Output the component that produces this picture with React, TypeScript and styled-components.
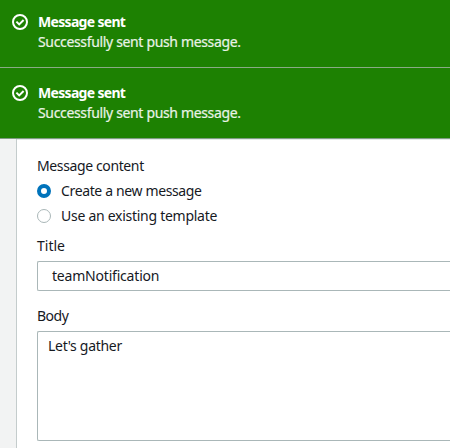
import React from "react";
import styled, { createGlobalStyle } from "styled-components";

const GlobalStyle = createGlobalStyle`
  * { box-sizing: border-box; }
  html, body { margin: 0; height: 100%; overflow: hidden; background: #f2f3f3; }
  body {
    font: 14px/20px "Noto Sans", "Open Sans", sans-serif;
    color: #16191f;
  }
`;

const Page = styled.div`
  display: flex;
  flex-direction: column;
  height: 448px;
  overflow: hidden;
`;

const Flash = styled.div<{ $top: number; $line: string }>`
  display: flex;
  flex: none;
  gap: 10px;
  padding: ${(p) => p.$top}px 12px 15px;
  background: #1d8102;
  border-bottom: 1px solid ${(p) => p.$line};
  color: #fff;
`;

const FlashIcon = styled.svg`
  flex: none;
  width: 16px;
  height: 16px;
  margin-top: 2px;
  fill: none;
  stroke: #fff;
  stroke-width: 2;
`;

const Text = styled.span<{ $spacing?: number }>`
  display: block;
  white-space: nowrap;
  letter-spacing: ${(p) => p.$spacing ?? 0}px;
`;

const FlashTitle = styled(Text)`
  font-weight: 700;
`;

const FlashBody = styled(Text)`
  color: #e9f3e6;
  -webkit-text-stroke: 0.2px #e9f3e6;
`;

const Panel = styled.main`
  flex: 1;
  margin-left: 16px;
  padding: 17px 0 0 20px;
  background: #fff;
  border-left: 1px solid #c4cccc;
  box-shadow: inset 0 1px 0 #e3e8e8;
`;

const Options = styled.div`
  display: grid;
  gap: 5px;
  margin: 5px 0 10px;
`;

const Option = styled.div`
  display: flex;
  align-items: center;
  gap: 10px;
`;

const Radio = styled.i<{ $checked?: boolean }>`
  width: 14px;
  height: 14px;
  border: ${(p) => (p.$checked ? "4px solid #0073bb" : "1px solid #aab7b8")};
  border-radius: 50%;
  background: #fff;
`;

const Field = styled.div<{ $height: number; $indent: number }>`
  height: ${(p) => p.$height}px;
  margin: 5px 0 15px;
  padding: 4px 0 0 ${(p) => p.$indent}px;
  border: 1px solid #aab7b8;
  border-right: 0;
  border-radius: 2px 0 0 2px;
`;

function Notice({ top, line }: { top: number; line: string }) {
  return (
    <Flash $top={top} $line={line}>
      <FlashIcon viewBox="0 0 16 16">
        <circle cx="8" cy="8" r="7" />
        <path d="M4.4 7.6 7.2 10.4 11.6 6" />
      </FlashIcon>
      <div>
        <FlashTitle $spacing={-0.68}>Message sent</FlashTitle>
        <FlashBody $spacing={-0.34}>Successfully sent push message.</FlashBody>
      </div>
    </Flash>
  );
}

export default function App() {
  return (
    <Page>
      <GlobalStyle />
      <Notice top={12} line="#8aab85" />
      <Notice top={15} line="#7f9c83" />
      <Panel>
        <Text $spacing={-0.38}>Message content</Text>
        <Options>
          <Option>
            <Radio $checked />
            <Text $spacing={-0.36}>Create a new message</Text>
          </Option>
          <Option>
            <Radio />
            <Text $spacing={-0.27}>Use an existing template</Text>
          </Option>
        </Options>
        <Text>Title</Text>
        <Field $height={30} $indent={14}>
          <Text $spacing={-0.2}>teamNotification</Text>
        </Field>
        <Text $spacing={-0.5}>Body</Text>
        <Field $height={110} $indent={10}>
          <Text $spacing={-0.3}>Let's gather</Text>
        </Field>
      </Panel>
    </Page>
  );
}
